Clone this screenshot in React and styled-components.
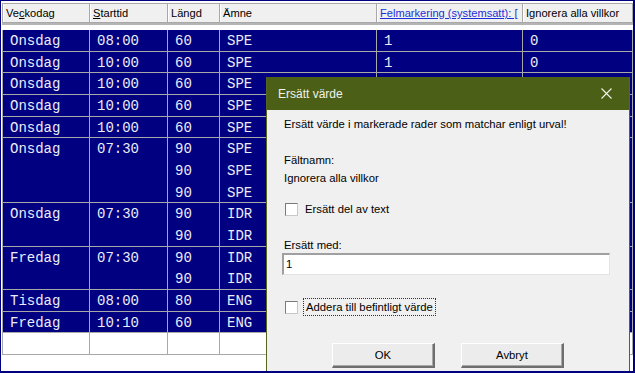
import React from "react";
import styled, { createGlobalStyle } from "styled-components";

const Global = createGlobalStyle`
  html, body { margin: 0; padding: 0; background: #fff; }
  #root { width: 635px; height: 373px; }
`;

const NAVY = "#000080";
const GRID = "#a8a8a8";
const ROW = 21.667;

const Screen = styled.div`
  position: relative;
  width: 635px;
  height: 373px;
  box-sizing: border-box;
  border-style: solid;
  border-color: ${NAVY};
  border-width: 1px 2px 2px 1px;
  background: #fff;
  overflow: hidden;
  padding: 2px 0 0 1px;
`;

const cols = "87px 78px 52px 157px 146px 1fr";

const HeaderRow = styled.div`
  display: grid;
  grid-template-columns: ${cols};
  height: 20px;
  box-sizing: border-box;
  border-top: 1px solid ${GRID};
  border-left: 1px solid ${GRID};
  border-bottom: 1px solid ${GRID};
  background: #f0f0f0;
`;

const HeaderCell = styled.div`
  box-sizing: border-box;
  border-right: 1px solid ${GRID};
  border-left: 1px solid #fff;
  padding-left: 2px;
  font-family: "Liberation Sans", Arial, sans-serif;
  font-size: 11.1px;
  line-height: 19px;
  color: ${(p) => (p.$link ? "#1a2fd8" : "#000")};
  text-decoration: ${(p) => (p.$link ? "underline" : "none")};
  white-space: nowrap;
  overflow: hidden;
`;

const HeaderShade = styled.div`
  height: 2px;
  background: #b4b4b4;
`;

const Gap = styled.div`
  height: 5px;
`;

const Table = styled.div`
  border-left: 1px solid ${GRID};
`;

const Record = styled.div`
  display: grid;
  grid-template-columns: ${cols};
  height: ${(p) => p.$lines * ROW}px;
  box-sizing: border-box;
  border-bottom: 1px solid ${GRID};
  background: ${(p) => (p.$empty ? "#fff" : NAVY)};
`;

const Cell = styled.div`
  box-sizing: border-box;
  border-right: 1px solid ${GRID};
  padding-left: 7px;
  padding-top: 1px;
  font-family: "Liberation Mono", "Courier New", monospace;
  font-size: 14px;
  color: #ececf8;
  display: flex;
  flex-direction: column;
`;

const Line = styled.div`
  height: ${ROW}px;
  line-height: ${ROW - 1}px;
  white-space: nowrap;
`;

const U = styled.span`
  text-decoration: underline;
`;

/* Dialog */
const Dialog = styled.div`
  position: absolute;
  left: 265px;
  top: 76px;
  width: 364px;
  height: 320px;
  box-sizing: border-box;
  border: 1px solid #56661f;
  border-top: none;
  background: #f0f0f0;
  font-family: "Liberation Sans", Arial, sans-serif;
  font-size: 11.3px;
  color: #000;
`;

const TitleBar = styled.div`
  height: 33px;
  background: #4c5f16;
  display: flex;
  align-items: center;
  justify-content: space-between;
  padding: 0 0 0 11px;
  color: #f2f2ea;
  font-size: 12px;
`;

const Close = styled.div`
  width: 36px;
  height: 33px;
  display: flex;
  align-items: center;
  justify-content: center;
  margin-right: 5px;
`;

const Body = styled.div`
  padding: 7px 0 0 17px;
  line-height: 14px;
`;

const Text = styled.div`
  margin-top: ${(p) => p.$mt || 0}px;
  height: 14px;
  white-space: nowrap;
`;

const CheckRow = styled.div`
  display: flex;
  align-items: center;
  gap: 7px;
  height: 14px;
  margin-top: ${(p) => p.$mt || 0}px;
`;

const Box = styled.div`
  width: 13px;
  height: 13px;
  box-sizing: border-box;
  background: #fff;
  border: 1px solid #7a7a7a;
  border-right-color: #c8c8c8;
  border-bottom-color: #c8c8c8;
  margin-left: 1px;
`;

const Focus = styled.span`
  outline: 1px dotted #333;
  outline-offset: 1px;
  padding: 0 1px;
`;

const Input = styled.div`
  margin-top: 1px;
  margin-left: -2px;
  width: 328px;
  height: 22px;
  box-sizing: border-box;
  background: #fff;
  border: 2px solid #a0a0a0;
  border-right: 1px solid #e3e3e3;
  border-bottom: 1px solid #e3e3e3;
  padding-left: 2px;
  line-height: 18px;
`;

const Buttons = styled.div`
  display: flex;
  justify-content: center;
  gap: 26px;
  margin-top: 29px;
  margin-left: -17px;
`;

const Button = styled.div`
  width: 103px;
  height: 25px;
  box-sizing: border-box;
  background: #ececec;
  border: 1px solid #fff;
  border-right: 2px solid #6e6e6e;
  border-bottom: 2px solid #6e6e6e;
  box-shadow: inset -1px -1px 0 #a8a8a8;
  display: flex;
  align-items: center;
  justify-content: center;
  padding-bottom: 1px;
`;

const rows = [
  { d: "Onsdag", t: "08:00", l: ["60"], a: ["SPE"], f: "1", i: "0" },
  { d: "Onsdag", t: "10:00", l: ["60"], a: ["SPE"], f: "1", i: "0" },
  { d: "Onsdag", t: "10:00", l: ["60"], a: ["SPE"] },
  { d: "Onsdag", t: "10:00", l: ["60"], a: ["SPE"] },
  { d: "Onsdag", t: "10:00", l: ["60"], a: ["SPE"] },
  { d: "Onsdag", t: "07:30", l: ["90", "90", "90"], a: ["SPE", "SPE", "SPE"] },
  { d: "Onsdag", t: "07:30", l: ["90", "90"], a: ["IDR", "IDR"] },
  { d: "Fredag", t: "07:30", l: ["90", "90"], a: ["IDR", "IDR"] },
  { d: "Tisdag", t: "08:00", l: ["80"], a: ["ENG"] },
  { d: "Fredag", t: "10:10", l: ["60"], a: ["ENG"] },
];

export default function App() {
  return (
    <>
      <Global />
      <Screen>
        <HeaderRow>
          <HeaderCell>Ve<U>c</U>kodag</HeaderCell>
          <HeaderCell><U>S</U>tarttid</HeaderCell>
          <HeaderCell>Längd</HeaderCell>
          <HeaderCell>Ämne</HeaderCell>
          <HeaderCell $link>Felmarkering (systemsatt): [</HeaderCell>
          <HeaderCell>Ignorera alla villkor</HeaderCell>
        </HeaderRow>
        <HeaderShade />
        <Gap />
        <Table>
          {rows.map((r, k) => (
            <Record key={k} $lines={r.l.length}>
              <Cell><Line>{r.d}</Line></Cell>
              <Cell><Line>{r.t}</Line></Cell>
              <Cell>{r.l.map((x, j) => <Line key={j}>{x}</Line>)}</Cell>
              <Cell>{r.a.map((x, j) => <Line key={j}>{x}</Line>)}</Cell>
              <Cell>{r.f && <Line>{r.f}</Line>}</Cell>
              <Cell>{r.i && <Line>{r.i}</Line>}</Cell>
            </Record>
          ))}
          <Record $lines={1} $empty>
            <Cell /><Cell /><Cell /><Cell /><Cell /><Cell />
          </Record>
        </Table>

        <Dialog>
          <TitleBar>
            <span>Ersätt värde</span>
            <Close>
              <svg width="11" height="11" viewBox="0 0 11 11">
                <path d="M0.5 0.5 L10.5 10.5 M10.5 0.5 L0.5 10.5" stroke="#f2f2ea" strokeWidth="1.1" fill="none" />
              </svg>
            </Close>
          </TitleBar>
          <Body>
            <Text>Ersätt värde i markerade rader som matchar enligt urval!</Text>
            <Text $mt={22}>Fältnamn:</Text>
            <Text $mt={4}>Ignorera alla villkor</Text>
            <CheckRow $mt={17}>
              <Box />
              <span>Ersätt del av text</span>
            </CheckRow>
            <Text $mt={22}>Ersätt med:</Text>
            <Input>1</Input>
            <CheckRow $mt={25}>
              <Box />
              <Focus>Addera till befintligt värde</Focus>
            </CheckRow>
            <Buttons>
              <Button>OK</Button>
              <Button>Avbryt</Button>
            </Buttons>
          </Body>
        </Dialog>
      </Screen>
    </>
  );
}
